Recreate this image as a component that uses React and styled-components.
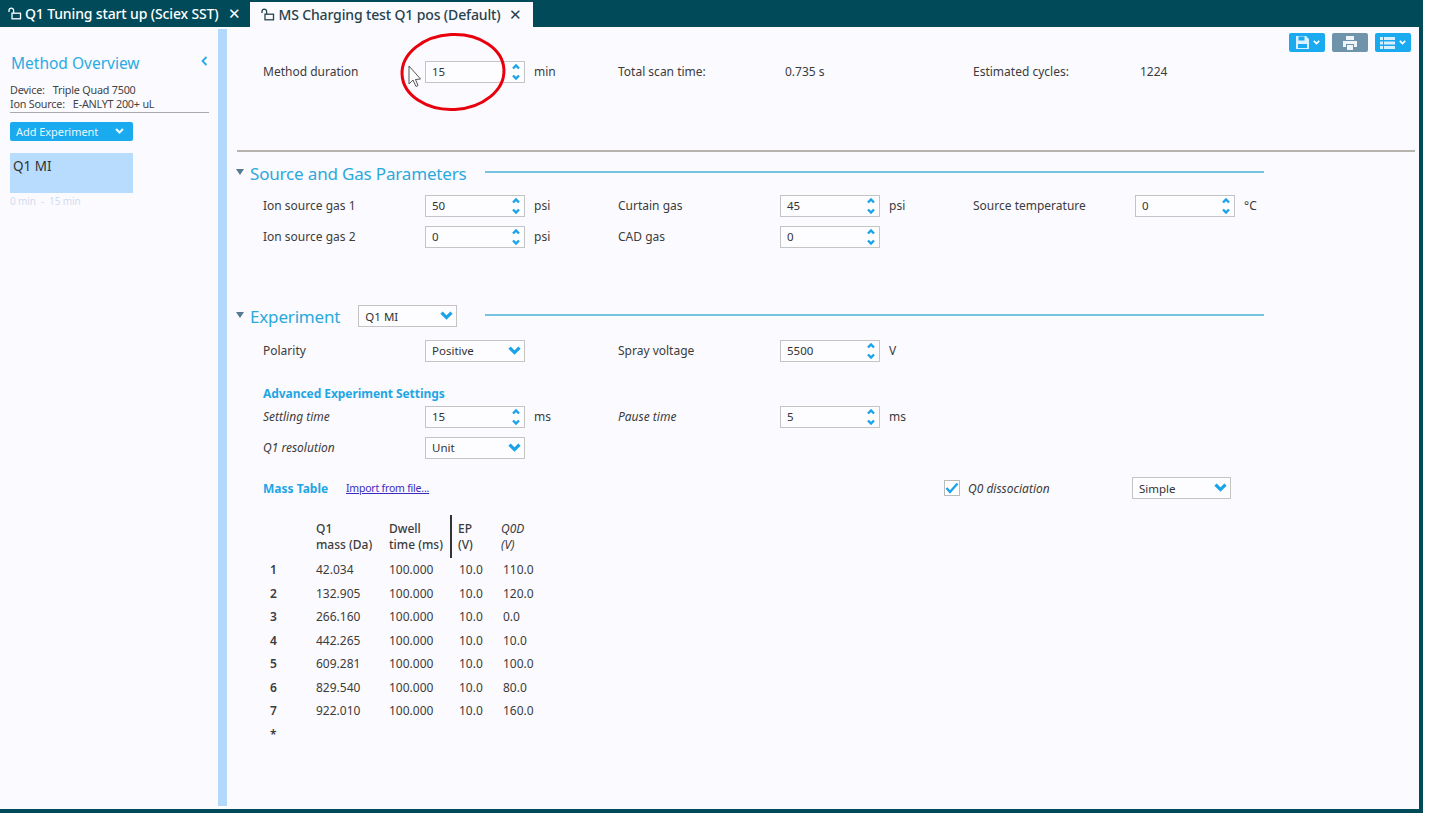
import React from 'react'
import styled, { createGlobalStyle } from 'styled-components'

const Global = createGlobalStyle`
  html, body { margin: 0; padding: 0; background: #fff; }
  body { font-family: "Noto Sans", "Open Sans", "Liberation Sans", sans-serif; color: #333; }
`

const Window = styled.div`
  position: relative;
  box-sizing: border-box;
  width: 1423px;
  height: 813px;
  display: flex;
  flex-direction: column;
  background: #fbfaff;
  border-right: 4px solid #004a5a;
  border-bottom: 4px solid #004a5a;
  overflow: hidden;
`
const TabBar = styled.div`
  height: 27px;
  flex: none;
  background: #004a5a;
  display: flex;
  align-items: flex-end;
  padding-left: 7px;
`
const Tab = styled.div`
  height: ${p => (p.$active ? 25 : 27)}px;
  box-sizing: border-box;
  display: flex;
  align-items: center;
  padding: ${p => (p.$active ? '0 11px 0 11px' : '0 9px 0 1px')};
  margin-left: ${p => (p.$active ? 1 : 0)}px;
  background: ${p => (p.$active ? '#fbfaff' : 'transparent')};
  color: ${p => (p.$active ? '#26424b' : '#fff')};
  font-size: 14px;
  font-weight: 500;
  letter-spacing: -0.01em;
  white-space: nowrap;
  svg { flex: none; margin-right: 2px; }
`
const TabClose = styled.span`
  margin-left: 9px;
  font-size: 15px;
  line-height: 1;
`
const Main = styled.div`
  flex: 1;
  display: flex;
  min-height: 0;
`
const Side = styled.aside`
  width: 218px;
  flex: none;
  box-sizing: border-box;
  padding: 26px 9px 0 10px;
`
const SideHead = styled.div`
  display: flex;
  justify-content: space-between;
  align-items: center;
  color: #29abe2;
  font-size: 15.5px;
  height: 20px;
  padding-left: 1px;
`
const Collapse = styled.span`
  margin-top: -5px;
  display: flex;
  margin-right: 1px;
`
const DeviceInfo = styled.div`
  margin-top: 10px;
  padding-bottom: 1px;
  font-size: 10.8px;
  line-height: 14px;
  letter-spacing: -0.02em;
  color: #444;
  border-bottom: 1px solid #aaa;
  span { margin-right: 8px; }
`
const AddButton = styled.div`
  width: 123px;
  height: 19px;
  margin-top: 9px;
  box-sizing: border-box;
  padding: 0 9px 0 6px;
  display: flex;
  align-items: center;
  justify-content: space-between;
  background: #19aaf0;
  border-radius: 2px;
  color: #e8f7ff;
  font-size: 11px;
  letter-spacing: -0.005em;
`
const ExperimentCard = styled.div`
  width: 123px;
  height: 40px;
  margin-top: 12px;
  box-sizing: border-box;
  padding: 3px 3px;
  background: #b8dcfe;
  color: #333;
  font-size: 13.5px;
  line-height: 20px;
`
const CardTime = styled.div`
  margin-top: 1px;
  font-size: 10px;
  letter-spacing: -0.01em;
  color: #d2dcec;
`
const Splitter = styled.div`
  width: 9px;
  flex: none;
  margin-top: 2px;
  margin-bottom: 3px;
  background: #b3d8fc;
`
const Content = styled.main`
  flex: 1;
  min-width: 0;
  box-sizing: border-box;
  padding: 0 4px 0 10px;
`
const FieldRow = styled.div`
  display: grid;
  grid-template-columns: 355px 355px 355px;
  height: 31px;
  align-items: center;
  padding-left: 26px;
`
const Field = styled.div`
  display: flex;
  align-items: center;
  font-size: 12px;
  color: #3c3c3c;
`
const Label = styled.span`
  width: ${p => p.$w || 162}px;
  flex: none;
  font-style: ${p => (p.$italic ? 'italic' : 'normal')};
`
const Box = styled.div`
  width: ${p => p.$w || 100}px;
  height: 22px;
  flex: none;
  box-sizing: border-box;
  padding: 0 3px 0 6px;
  display: flex;
  align-items: center;
  justify-content: space-between;
  border: 1.5px solid #c4c4c4;
  background: #fdfdff;
  font-size: 11.5px;
  color: #333;
`
const Unit = styled.span`
  margin-left: 9px;
`
const Value = styled.span`
  flex: 0 1 auto;
`
const Gap = styled.div`
  height: ${p => p.$h}px;
`
const HardRule = styled.div`
  height: 2px;
  background: #b5b3ac;
`
const SectionHead = styled.div`
  height: 26px;
  display: flex;
  align-items: center;
`
const Caret = styled.span`
  width: 0;
  height: 0;
  margin: -3px 6px 0 -1px;
  border-left: 4px solid transparent;
  border-right: 4px solid transparent;
  border-top: 6px solid #557a92;
`
const SectionTitle = styled.span`
  color: #2aa9dc;
  font-size: 17px;
  letter-spacing: -0.01em;
  white-space: nowrap;
`
const SectionRule = styled.span`
  flex: none;
  width: 779px;
  height: 2px;
  margin: -3px 151px 0 auto;
  background: #75c3de;
`
const HeadSelect = styled(Box)`
  margin-left: 18px;
`
const SubHead = styled.div`
  color: #1fa6e4;
  font-size: 12px;
  font-weight: 700;
  letter-spacing: -0.005em;
  padding-left: 26px;
  height: 15px;
  display: flex;
  align-items: center;
`
const MassBar = styled.div`
  height: 26px;
  display: flex;
  align-items: center;
  padding-left: 26px;
`
const MassTitle = styled.span`
  width: 83px;
  flex: none;
  color: #1fa6e4;
  font-size: 12px;
  font-weight: 700;
`
const ImportLink = styled.a`
  width: 598px;
  flex: none;
  color: #3a2cc0;
  font-size: 10.5px;
  letter-spacing: -0.02em;
  text-decoration: underline;
`
const CheckField = styled.div`
  width: 188px;
  flex: none;
  display: flex;
  align-items: center;
  gap: 8px;
  font-size: 12px;
  font-style: italic;
  color: #3c3c3c;
`
const CheckBox = styled.span`
  width: 16px;
  height: 16px;
  box-sizing: border-box;
  border: 1px solid #bbb;
  background: #fff;
  display: flex;
  align-items: center;
  justify-content: center;
`
const Table = styled.table`
  margin: 14px 0 0 33px;
  border-collapse: collapse;
  font-size: 12px;
  color: #3c3c3c;
  th { font-weight: 500; text-align: left; padding: 6px 0 5px; line-height: 16px; vertical-align: top; }
  td { padding: 0; height: 23.5px; }
`
const NumCell = styled.td`
  width: 46px;
  font-weight: 600;
`
const MassCell = styled.td`
  width: 73px;
`
const DwellHead = styled.th`
  width: 61px;
  && { border-right: 2px solid #333; }
`
const EpCell = styled.td`
  && { padding-left: 8px; }
`
const EpHead = styled.th`
  width: 43px;
  && { padding-left: 6px; }
`
const QodHead = styled.th`
  && { font-style: italic; font-weight: 400; }
`
const QodCell = styled.td`
  && { padding-left: 2px; }
`
const Toolbar = styled.div`
  position: absolute;
  top: 33px;
  right: 8px;
  display: flex;
  gap: 7px;
`
const ToolButton = styled.div`
  width: 36px;
  height: 19px;
  border-radius: 2px;
  background: ${p => p.$color || '#19aaf0'};
  display: flex;
  align-items: center;
  justify-content: center;
  gap: 3px;
`
const Annotation = styled.svg`
  position: absolute;
  left: 396px;
  top: 30px;
  pointer-events: none;
`

const Lock = ({ color }) => (
  <svg width="15" height="13" viewBox="0 0 15 13" fill="none" stroke={color} strokeWidth="1.3">
    <path d="M1 5V3.4a2.3 2.3 0 0 1 4.6 0V6" />
    <rect x="4" y="6.2" width="8.5" height="5.6" />
  </svg>
)
const Spin = () => (
  <svg width="10" height="18" viewBox="0 0 10 18" fill="none" stroke="#1aa3e8" strokeWidth="2.4">
    <path d="M2 5.5 5 2.5 8 5.5M2 12.5 5 15.5 8 12.5" />
  </svg>
)
const Chevron = ({ color = '#1aa3e8', w = 13 }) => (
  <svg width={w} height={w * 0.7} viewBox="0 0 13 9" fill="none" stroke={color} strokeWidth="3.2">
    <path d="M1.5 1.5 6.5 6.5 11.5 1.5" />
  </svg>
)

const Spinner = ({ value }) => (
  <Box>
    <Value>{value}</Value>
    <Spin />
  </Box>
)
const Select = ({ value, w }) => (
  <Box $w={w}>
    <Value>{value}</Value>
    <Chevron />
  </Box>
)
const SpinField = ({ label, value, unit, italic }) => (
  <Field>
    <Label $italic={italic}>{label}</Label>
    <Spinner value={value} />
    {unit && <Unit>{unit}</Unit>}
  </Field>
)

const masses = [
  ['42.034', '110.0'],
  ['132.905', '120.0'],
  ['266.160', '0.0'],
  ['442.265', '10.0'],
  ['609.281', '100.0'],
  ['829.540', '80.0'],
  ['922.010', '160.0']
]

const App = () => (
  <>
    <Global />
    <Window>
      <TabBar>
        <Tab>
          <Lock color="#fff" />
          Q1 Tuning start up (Sciex SST)
          <TabClose>✕</TabClose>
        </Tab>
        <Tab $active>
          <Lock color="#26424b" />
          MS Charging test Q1 pos (Default)
          <TabClose>✕</TabClose>
        </Tab>
      </TabBar>
      <Main>
        <Side>
          <SideHead>
            Method Overview
            <Collapse>
              <svg width="7" height="10" viewBox="0 0 7 10" fill="none" stroke="#29abe2" strokeWidth="1.8">
                <path d="M5.5 1 1.5 5 5.5 9" />
              </svg>
            </Collapse>
          </SideHead>
          <DeviceInfo>
            <div><span>Device:</span>Triple Quad 7500</div>
            <div><span>Ion Source:</span>E-ANLYT 200+ uL</div>
          </DeviceInfo>
          <AddButton>
            Add Experiment
            <Chevron color="#e8f7ff" w={9} />
          </AddButton>
          <ExperimentCard>Q1 MI</ExperimentCard>
          <CardTime>0 min &nbsp;-&nbsp; 15 min</CardTime>
        </Side>
        <Splitter />
        <Content>
          <Gap $h={29} />
          <FieldRow>
            <SpinField label="Method duration" value="15" unit="min" />
            <Field><Label $w={167}>Total scan time:</Label>0.735 s</Field>
            <Field><Label $w={167}>Estimated cycles:</Label>1224</Field>
          </FieldRow>
          <Gap $h={63} />
          <HardRule />
          <Gap $h={8} />
          <SectionHead>
            <Caret />
            <SectionTitle>Source and Gas Parameters</SectionTitle>
            <SectionRule />
          </SectionHead>
          <Gap $h={4} />
          <FieldRow>
            <SpinField label="Ion source gas 1" value="50" unit="psi" />
            <SpinField label="Curtain gas" value="45" unit="psi" />
            <SpinField label="Source temperature" value="0" unit="°C" />
          </FieldRow>
          <FieldRow>
            <SpinField label="Ion source gas 2" value="0" unit="psi" />
            <SpinField label="CAD gas" value="0" />
          </FieldRow>
          <Gap $h={51} />
          <SectionHead>
            <Caret />
            <SectionTitle>Experiment</SectionTitle>
            <HeadSelect $w={99}><Value>Q1 MI</Value><Chevron /></HeadSelect>
            <SectionRule />
          </SectionHead>
          <Gap $h={6} />
          <FieldRow>
            <Field><Label>Polarity</Label><Select value="Positive" /></Field>
            <SpinField label="Spray voltage" value="5500" unit="V" />
          </FieldRow>
          <Gap $h={20} />
          <SubHead>Advanced Experiment Settings</SubHead>
          <FieldRow>
            <SpinField italic label="Settling time" value="15" unit="ms" />
            <SpinField italic label="Pause time" value="5" unit="ms" />
          </FieldRow>
          <FieldRow>
            <Field><Label $italic>Q1 resolution</Label><Select value="Unit" /></Field>
          </FieldRow>
          <Gap $h={12} />
          <MassBar>
            <MassTitle>Mass Table</MassTitle>
            <ImportLink>Import from file...</ImportLink>
            <CheckField>
              <CheckBox>
                <svg width="14" height="12" viewBox="0 0 14 12" fill="none" stroke="#1aa3e8" strokeWidth="2.4">
                  <path d="M1.5 6 5 10 12.5 1.5" />
                </svg>
              </CheckBox>
              Q0 dissociation
            </CheckField>
            <Select value="Simple" w={99} />
          </MassBar>
          <Table>
            <thead>
              <tr>
                <th />
                <th>Q1<br />mass (Da)</th>
                <DwellHead>Dwell<br />time (ms)</DwellHead>
                <EpHead>EP<br />(V)</EpHead>
                <QodHead>Q0D<br />(V)</QodHead>
              </tr>
            </thead>
            <tbody>
              {masses.map((m, k) => (
                <tr key={k}>
                  <NumCell>{k + 1}</NumCell>
                  <MassCell>{m[0]}</MassCell>
                  <td>100.000</td>
                  <EpCell>10.0</EpCell>
                  <QodCell>{m[1]}</QodCell>
                </tr>
              ))}
              <tr>
                <NumCell>*</NumCell>
              </tr>
            </tbody>
          </Table>
        </Content>
      </Main>
      <Toolbar>
        <ToolButton>
          <svg width="15" height="15" viewBox="0 0 15 15" fill="#d8f0ff">
            <path d="M1 1h10l3 3v10H1zM3.5 1.5v4h6v-4zM3 9v4h9V9z" fillRule="evenodd" />
          </svg>
          <Chevron color="#fff" w={7} />
        </ToolButton>
        <ToolButton $color="#6f93ab">
          <svg width="16" height="14" viewBox="0 0 16 14" fill="#eef4fa">
            <path d="M4 0h8v4H4zM1 5h14v6h-3V8H4v3H1zM5 9h6v5H5z" />
          </svg>
        </ToolButton>
        <ToolButton>
          <svg width="16" height="14" viewBox="0 0 16 14" fill="#d8f0ff">
            <path d="M0 1h3v3H0zM4 1h11v3H4zM0 5.5h3v3H0zM4 5.5h11v3H4zM0 10h3v3H0zM4 10h11v3H4z" />
          </svg>
          <Chevron color="#fff" w={7} />
        </ToolButton>
      </Toolbar>
      <Annotation width="114" height="86" viewBox="0 0 114 86">
        <ellipse cx="57" cy="42" rx="51" ry="37.5" fill="none" stroke="#e8000d" strokeWidth="3" transform="rotate(-3 57 42)" />
        <path d="M13 36V54L17 50 20 56.5 22 55.5 19.5 49.5 24.5 49Z" fill="#fff" stroke="#555" strokeWidth="1" />
      </Annotation>
    </Window>
  </>
)

export default App
